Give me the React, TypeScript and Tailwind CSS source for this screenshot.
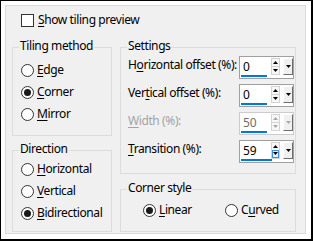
import React from "react";

function U({ children }: { children: React.ReactNode }) {
  return <span className="underline decoration-1 underline-offset-[2px]">{children}</span>;
}

function Radio({ checked }: { checked?: boolean }) {
  return (
    <span className="flex h-[13px] w-[13px] shrink-0 items-center justify-center rounded-full border border-[#333333] bg-white">
      {checked && <span className="h-[7px] w-[7px] rounded-full bg-[#1a1a1a]" />}
    </span>
  );
}

function RadioRow({ checked, children }: { checked?: boolean; children: React.ReactNode }) {
  return (
    <div className="flex h-[22px] items-center gap-[3px]">
      <Radio checked={checked} />
      <span className="whitespace-nowrap leading-[16px]">{children}</span>
    </div>
  );
}

function GroupBox({
  title,
  className,
  children,
}: {
  title: string;
  className: string;
  children: React.ReactNode;
}) {
  return (
    <div className={`relative border border-[#dcdcdc] ${className}`}>
      <span className="absolute -top-[10px] left-[6px] whitespace-nowrap bg-[#f0f0f0] px-[1px] leading-[16px]">
        {title}
      </span>
      {children}
    </div>
  );
}

function Tri({ up, color }: { up?: boolean; color: string }) {
  return (
    <svg width="5" height="3" viewBox="0 0 5 3" className="block">
      {up ? <path d="M2.5 0 L5 3 L0 3 Z" fill={color} /> : <path d="M0 0 L5 0 L2.5 3 Z" fill={color} />}
    </svg>
  );
}

function Spinner({
  value,
  pct,
  disabled,
  focusDown,
}: {
  value: string;
  pct: number;
  disabled?: boolean;
  focusDown?: boolean;
}) {
  const arrow = disabled ? "#a8a8a8" : "#000000";
  return (
    <div
      className={`flex h-[23px] w-[55px] shrink-0 flex-col bg-white pt-[1px] pb-[1px] border ${
        disabled ? "border-[#cccccc]" : "border-[#a0a0a0]"
      }`}
    >
      <div className="flex h-[17px] items-stretch">
        <span
          className={`w-[31px] pl-[3px] pt-[2px] text-[12px] leading-[14px] tracking-normal ${
            disabled ? "text-[#6d6d6d]" : "text-black"
          }`}
        >
          {value}
        </span>
        <div className="flex w-[9px] flex-col border border-[#d4d4d4] bg-[#f7f7f7]">
          <div className="flex flex-1 items-center justify-center">
            <Tri up color={arrow} />
          </div>
          <div
            className={`flex flex-1 items-center justify-center border-t ${
              focusDown ? "border border-[#3c8fd8] bg-[#e5f1fb]" : "border-[#d4d4d4]"
            }`}
          >
            <Tri color={arrow} />
          </div>
        </div>
        <div className="ml-[3px] flex w-[10px] items-center justify-center border border-t-white border-l-white border-r-[#6d6d6d] border-b-[#6d6d6d] bg-[#f0f0f0]">
          <Tri color={arrow} />
        </div>
      </div>
      <div className="mt-auto h-[2px] w-[52px] pl-[1px]">
        <div className="h-[2px] bg-[#0078d7]" style={{ width: `${Math.round(pct * 52)}px` }} />
      </div>
    </div>
  );
}

function SettingRow({
  label,
  disabled,
  children,
}: {
  label: React.ReactNode;
  disabled?: boolean;
  children: React.ReactNode;
}) {
  return (
    <div className="flex h-[23px] items-start">
      <span
        className={`w-[111px] shrink-0 whitespace-nowrap pt-[1px] leading-[16px] ${
          disabled ? "text-[#a3a3a3]" : "text-black"
        }`}
      >
        {label}
      </span>
      {children}
    </div>
  );
}

export default function App() {
  return (
    <div className="h-[241px] w-[313px] border-t border-l border-r-2 border-b-2 border-black bg-white pt-[4px] pl-[4px] font-['Noto_Sans',sans-serif] text-[12px] tracking-[-0.4px] text-black">
      <div className="h-[229px] w-[301px] border border-[#dadada] bg-[#f0f0f0] pt-[6px] pl-[6px]">
        <div className="ml-[9px] flex h-[16px] items-center gap-[4px]">
          <span className="h-[13px] w-[13px] border border-[#333333] bg-white" />
          <span className="whitespace-nowrap leading-[16px]">
            <U>S</U>how tiling preview
          </span>
        </div>
        <div className="mt-[19px] flex gap-[8px]">
          <div className="flex w-[100px] flex-col gap-[14px]">
            <GroupBox title="Tiling method" className="h-[89px] pl-[8px] pt-[11px]">
              <RadioRow>
                <U>E</U>dge
              </RadioRow>
              <RadioRow checked>
                <U>C</U>orner
              </RadioRow>
              <RadioRow>
                <U>M</U>irror
              </RadioRow>
            </GroupBox>
            <GroupBox title="Direction" className="h-[82px] pl-[8px] pt-[7px]">
              <RadioRow>
                <U>H</U>orizontal
              </RadioRow>
              <RadioRow>
                <U>V</U>ertical
              </RadioRow>
              <RadioRow checked>
                <U>B</U>idirectional
              </RadioRow>
            </GroupBox>
          </div>
          <div className="flex w-[176px] flex-col gap-[15px]">
            <GroupBox title="Settings" className="flex h-[127px] flex-col gap-[5px] pl-[7px] pt-[8px]">
              <SettingRow
                label={
                  <>
                    H<U>o</U>rizontal offset (%):
                  </>
                }
              >
                <Spinner value="0" pct={0.5} />
              </SettingRow>
              <SettingRow
                label={
                  <>
                    Ver<U>t</U>ical offset (%):
                  </>
                }
              >
                <Spinner value="0" pct={0.5} />
              </SettingRow>
              <SettingRow
                disabled
                label={
                  <>
                    <U>W</U>idth (%):
                  </>
                }
              >
                <Spinner value="50" pct={0.5} disabled />
              </SettingRow>
              <SettingRow
                label={
                  <>
                    <U>T</U>ransition (%):
                  </>
                }
              >
                <Spinner value="59" pct={0.59} focusDown />
              </SettingRow>
            </GroupBox>
            <GroupBox title="Corner style" className="flex h-[43px] items-start pl-[22px] pt-[9px]">
              <div className="w-[82px]">
                <RadioRow checked>
                  <U>L</U>inear
                </RadioRow>
              </div>
              <RadioRow>
                C<U>u</U>rved
              </RadioRow>
            </GroupBox>
          </div>
        </div>
      </div>
    </div>
  );
}
